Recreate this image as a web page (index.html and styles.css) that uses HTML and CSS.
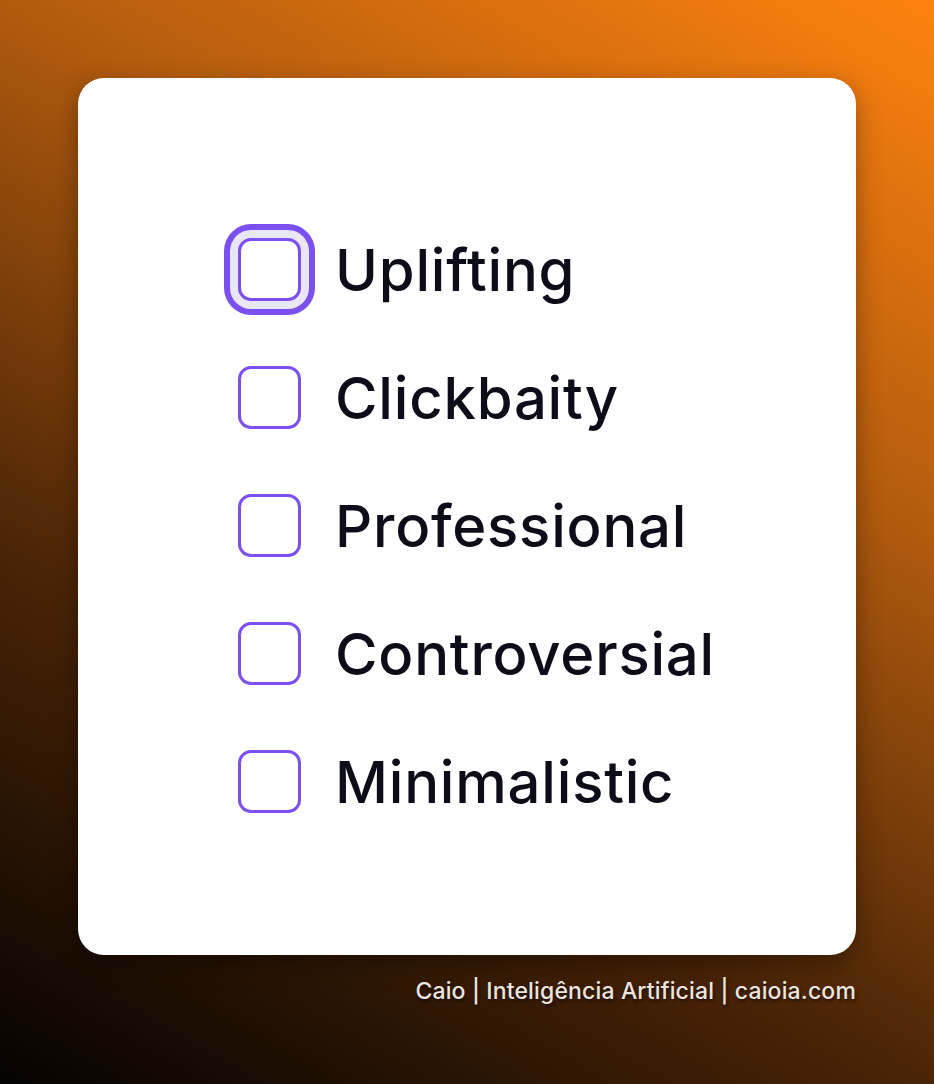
FILE: index.html
```html
<!DOCTYPE html>
<html lang="en">
<head>
  <meta charset="UTF-8">
  <meta name="viewport" content="width=device-width, initial-scale=1.0">
  <title>Tone options</title>
  <link rel="stylesheet" href="styles.css">
</head>
<body>
  <main class="page">
    <div class="tone-card">
      <ul class="tone-list">
        <li class="tone-item">
          <input class="tone-check is-focused" type="checkbox" id="tone-uplifting">
          <label class="tone-label" for="tone-uplifting">Uplifting</label>
        </li>
        <li class="tone-item">
          <input class="tone-check" type="checkbox" id="tone-clickbaity">
          <label class="tone-label" for="tone-clickbaity">Clickbaity</label>
        </li>
        <li class="tone-item">
          <input class="tone-check" type="checkbox" id="tone-professional">
          <label class="tone-label" for="tone-professional">Professional</label>
        </li>
        <li class="tone-item">
          <input class="tone-check" type="checkbox" id="tone-controversial">
          <label class="tone-label" for="tone-controversial">Controversial</label>
        </li>
        <li class="tone-item">
          <input class="tone-check" type="checkbox" id="tone-minimalistic">
          <label class="tone-label" for="tone-minimalistic">Minimalistic</label>
        </li>
      </ul>
    </div>
    <p class="credit">Caio | Inteligência Artificial | caioia.com</p>
  </main>
</body>
</html>
```

FILE: styles.css
```css
* {
  box-sizing: border-box;
  margin: 0;
  padding: 0;
}

html, body {
  height: 100%;
}

body {
  font-family: 'Inter', 'Noto Sans', Arial, sans-serif;
  background: linear-gradient(210deg, #ff830f 0%, #b25b0e 33%, #4a2406 67%, #050200 100%);
  min-height: 1084px;
}

.page {
  padding: 78px 78px 0 78px;
  display: flex;
  flex-direction: column;
}

.tone-card {
  background-color: #ffffff;
  border-radius: 26px;
  height: 877px;
  padding: 160px 0 0 160px;
  box-shadow: 0 8px 24px rgba(0, 0, 0, 0.35);
}

.tone-list {
  list-style: none;
  display: flex;
  flex-direction: column;
  gap: 65px;
}

.tone-item {
  display: flex;
  align-items: center;
  gap: 34px;
  height: 63px;
}

.tone-check {
  appearance: none;
  -webkit-appearance: none;
  width: 63px;
  height: 63px;
  flex: 0 0 63px;
  border: 3px solid #7b4ff0;
  border-radius: 13px;
  background-color: #ffffff;
  cursor: pointer;
}

/* keyboard focus ring on the active option */
.tone-check.is-focused {
  box-shadow: 0 0 0 8px #e9e6f5, 0 0 0 14px #7b4ff0;
}

.tone-label {
  font-size: 58px;
  font-weight: 500;
  color: #0d0d1a;
  letter-spacing: 0.8px;
  cursor: pointer;
}

.credit {
  align-self: flex-end;
  margin-top: 22px;
  font-size: 23px;
  font-weight: 500;
  letter-spacing: 0.15px;
  color: #ece5de;
  text-shadow: 1px 2px 3px rgba(0, 0, 0, 0.6);
}
```
